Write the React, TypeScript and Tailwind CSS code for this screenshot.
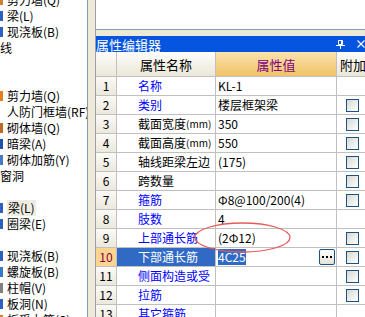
import React from "react";

const F = "font-['Noto_Sans_CJK_SC','Noto_Sans',sans-serif]";

type Item = { t: string; icon?: string; flush?: boolean; sel?: boolean };
const items: Item[] = [
  { t: "剪力墙(Q)", icon: "#d08030" },
  { t: "梁(L)", icon: "#2f5fc0" },
  { t: "现浇板(B)", icon: "#2f5fc0" },
  { t: "线", flush: true },
  { t: "" },
  { t: "" },
  { t: "剪力墙(Q)", icon: "#e08020" },
  { t: "人防门框墙(RF)" },
  { t: "砌体墙(Q)", icon: "#c06a28" },
  { t: "暗梁(A)", icon: "#2050b0" },
  { t: "砌体加筋(Y)", icon: "#4a78c8" },
  { t: "窗洞", flush: true },
  { t: "" },
  { t: "梁(L)", icon: "#2f5fc0", sel: true },
  { t: "圈梁(E)", icon: "#2f5fc0" },
  { t: "" },
  { t: "现浇板(B)", icon: "#2f5fc0" },
  { t: "螺旋板(B)", icon: "#3a78c0" },
  { t: "柱帽(V)", icon: "#808080" },
  { t: "板洞(N)", icon: "#2f5fc0" },
  { t: "板受力筋(S)", icon: "#d08030" },
];

type Row = { n: number; name: React.ReactNode; val?: string; blue: boolean; cb: boolean };
const mm = <span className="text-[10px]">(mm)</span>;
const rows: Row[] = [
  { n: 1, name: "名称", val: "KL-1", blue: true, cb: false },
  { n: 2, name: "类别", val: "楼层框架梁", blue: true, cb: true },
  { n: 3, name: <>截面宽度{mm}</>, val: "350", blue: false, cb: true },
  { n: 4, name: <>截面高度{mm}</>, val: "550", blue: false, cb: true },
  { n: 5, name: "轴线距梁左边", val: "(175)", blue: false, cb: true },
  { n: 6, name: "跨数量", val: "", blue: false, cb: true },
  { n: 7, name: "箍筋", val: "Φ8@100/200(4)", blue: true, cb: true },
  { n: 8, name: "肢数", val: "4", blue: true, cb: false },
  { n: 9, name: "上部通长筋", val: "(2Φ12)", blue: true, cb: true },
  { n: 10, name: "下部通长筋", val: "4C25", blue: true, cb: true },
  { n: 11, name: "侧面构造或受", val: "", blue: true, cb: true },
  { n: 12, name: "拉筋", val: "", blue: true, cb: true },
  { n: 13, name: "其它箍筋", val: "", blue: true, cb: false },
];

function Checkbox() {
  return (
    <div className="w-[13px] h-[13px] border border-[#1c5180] bg-linear-to-br from-[#d8d8d2] to-[#ffffff]" />
  );
}

export default function App() {
  return (
    <div className={`relative w-[365px] h-[317px] overflow-hidden bg-[#ece9d8] flex text-[12px] leading-none text-black ${F}`}>
      {/* left tree panel */}
      <div className="w-[88px] h-full bg-white border-r border-[#7f9db9] overflow-hidden shrink-0">
        <div className="-mt-[8px] flex flex-col">
          {items.map((it, i) => (
            <div key={i} className="h-[16px] flex items-center whitespace-nowrap">
              {it.flush ? (
                <span>{it.t}</span>
              ) : (
                <>
                  <div className="w-[3px] h-[10px] shrink-0" style={{ background: it.icon ?? "transparent" }} />
                  <span className={`ml-[4px] ${it.sel ? "bg-[#efedE2] bg-[#eeecdf] px-[1px] -ml-[1px] py-[2px]" : ""}`}>{it.t}</span>
                </>
              )}
            </div>
          ))}
        </div>
      </div>

      {/* gap */}
      <div className="w-[7px] h-full shrink-0" />

      {/* main */}
      <div className="flex-1 h-full flex flex-col border-l border-[#a0a0a0]">
        <div className="h-[30px] bg-white border-b border-[#7f9db9] shrink-0" />
        <div className="h-[6px] shrink-0" />
        <div className="h-[16px] bg-[#0555e0] flex items-center shrink-0 text-white">
          <span className="text-[13px] ml-[0px]">属性编辑器</span>
          <div className="flex-1" />
          <svg width="9" height="9" viewBox="0 0 9 9" className="mr-[12px]">
            <path d="M2.5 0.5h4v4h-4z M0 5.5h9 M4.5 5.5v3.5" stroke="white" strokeWidth="1" fill="none" />
            <path d="M5.5 1v4" stroke="white" strokeWidth="1" />
          </svg>
          <svg width="8" height="8" viewBox="0 0 8 8" className="mr-[1px]">
            <path d="M0.5 0.5l7 7 M7.5 0.5l-7 7" stroke="white" strokeWidth="1.1" />
          </svg>
        </div>

        {/* header */}
        <div className="h-[25px] flex shrink-0 border-b border-[#c0c0c0]">
          <div className="w-[21px] border-r border-[#c0c0c0] bg-linear-to-b from-[#fdfdfb] to-[#ebe7d8]" />
          <div className="w-[99px] border-r border-[#c0c0c0] bg-linear-to-b from-[#fdfdfb] to-[#ebe7d8] flex items-center justify-center text-[13px]">
            属性名称
          </div>
          <div className="w-[121px] border-r border-[#c0c0c0] bg-linear-to-b from-[#fbe2ae] to-[#f0c264] flex items-center justify-center text-[13px] text-[#800080]">
            属性值
          </div>
          <div className="flex-1 bg-linear-to-b from-[#fdfdfb] to-[#ebe7d8] flex items-center pl-[3px] text-[13px] whitespace-nowrap overflow-hidden">
            附加
          </div>
        </div>

        {/* rows */}
        {rows.map((r) => {
          const sel = r.n === 10;
          return (
            <div key={r.n} className="h-[19px] flex shrink-0 border-b border-[#c0c0c0]">
              <div
                className={`w-[21px] border-r border-[#c0c0c0] flex items-center justify-center ${
                  sel ? "bg-[#fdd590] text-[#800040]" : "bg-linear-to-b from-[#fbfaf6] to-[#ebe8dc]"
                }`}
              >
                {r.n}
              </div>
              <div
                className={`w-[99px] border-r border-[#c0c0c0] flex items-center pl-[21px] whitespace-nowrap overflow-hidden ${
                  sel ? "bg-[#316ac5] text-white" : r.blue ? "bg-white text-[#0000ff]" : "bg-white text-black"
                }`}
              >
                {r.name}
              </div>
              <div className="w-[121px] border-r border-[#c0c0c0] bg-white flex items-center pl-[2px] whitespace-nowrap overflow-hidden">
                {sel ? (
                  <>
                    <span className="bg-[#316ac5] text-white py-[2px]">{r.val}</span>
                    <div className="flex-1" />
                    <div className="w-[16px] h-[16px] mr-[1px] rounded-[2px] border border-[#1c5180] bg-linear-to-b from-white to-[#e4e2da] flex items-center justify-center gap-[2px]">
                      <div className="w-[2px] h-[2px] bg-black" />
                      <div className="w-[2px] h-[2px] bg-black" />
                      <div className="w-[2px] h-[2px] bg-black" />
                    </div>
                  </>
                ) : (
                  <span>{r.val}</span>
                )}
              </div>
              <div className="flex-1 bg-white flex items-center pl-[9px]">{r.cb && <Checkbox />}</div>
            </div>
          );
        })}
      </div>

      {/* red annotation ellipse */}
      <svg className="absolute left-[190px] top-[220px] pointer-events-none" width="104" height="36" viewBox="0 0 104 36">
        <ellipse cx="52.5" cy="17.5" rx="47.5" ry="14.5" fill="none" stroke="#e85a5a" strokeWidth="1.3" />
      </svg>
    </div>
  );
}
